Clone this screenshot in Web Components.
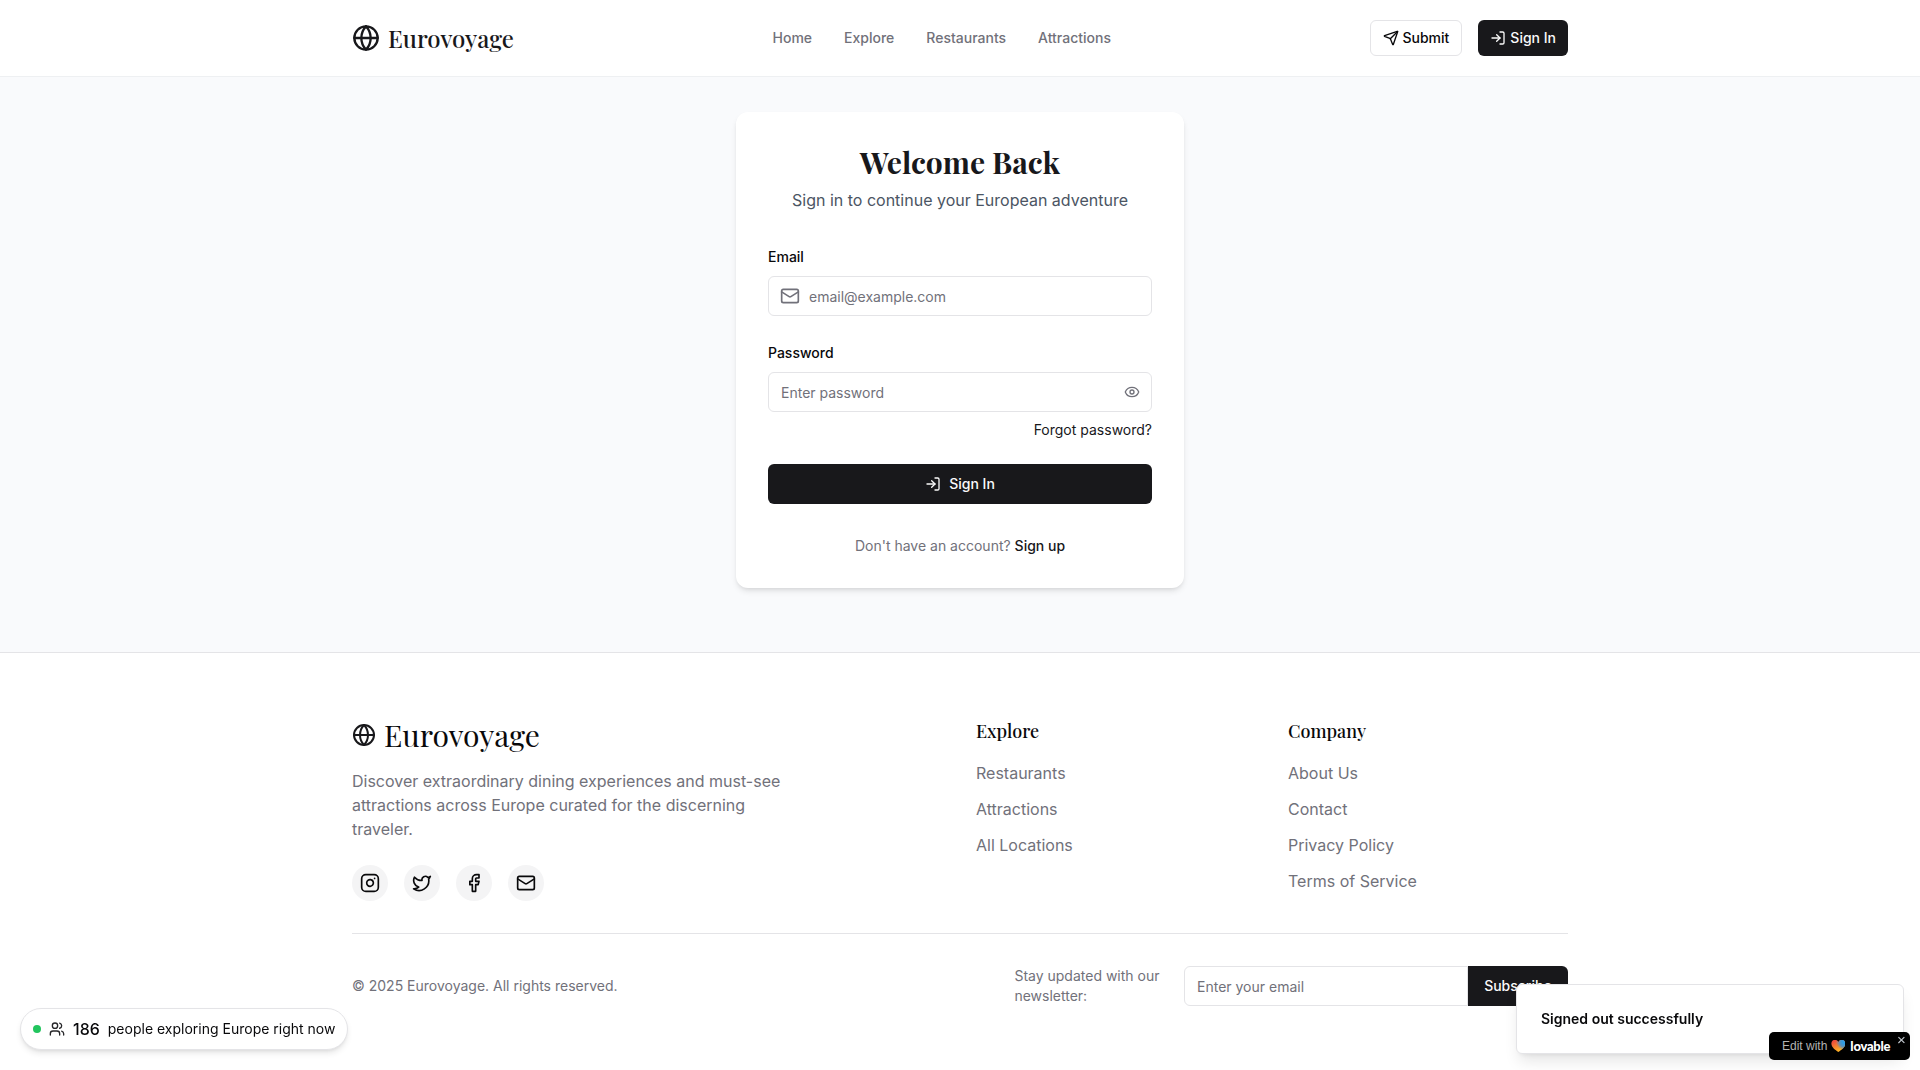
<!DOCTYPE html>
<html lang="en">
<head>
<meta charset="utf-8">
<title>Eurovoyage</title>
<style>
html,body{margin:0;height:1070px;overflow:hidden;background:#fff}
body{font:400 16px/24px Inter,sans-serif;color:#09090b;
--muted:#71717a;--line:#e4e4e7;--ink:#18181b;--serif:"Playfair Display","Liberation Serif",serif}
</style>
</head>
<body>
<site-header></site-header>
<sign-in-page></sign-in-page>
<site-footer></site-footer>
<visitor-pill count="186">people exploring Europe right now</visitor-pill>
<toast-message>Signed out successfully</toast-message>
<edit-badge></edit-badge>
<script>
const base='<style>*{box-sizing:border-box;margin:0}:host{display:block;box-sizing:border-box}a{color:inherit;text-decoration:none;white-space:nowrap}</style>';
const define=(name,render)=>customElements.define(name,class extends HTMLElement{
  connectedCallback(){
    if(this.shadowRoot)return;
    this.attachShadow({mode:'open'}).innerHTML=base+render(this);
  }
});
const icons={
globe:'<circle cx="12" cy="12" r="10"/><path d="M12 2a14.5 14.5 0 0 0 0 20 14.5 14.5 0 0 0 0-20"/><path d="M2 12h20"/>',
send:'<path d="M14.536 21.686a.5.5 0 0 0 .937-.024l6.5-19a.496.496 0 0 0-.635-.635l-19 6.5a.5.5 0 0 0-.024.937l7.93 3.18a2 2 0 0 1 1.112 1.11z"/><path d="m21.854 2.147-10.94 10.939"/>',
login:'<path d="M15 3h4a2 2 0 0 1 2 2v14a2 2 0 0 1-2 2h-4"/><path d="m10 17 5-5-5-5"/><path d="M15 12H3"/>',
mail:'<rect width="20" height="16" x="2" y="4" rx="2"/><path d="m22 7-8.97 5.7a1.94 1.94 0 0 1-2.06 0L2 7"/>',
eye:'<path d="M2.062 12.348a1 1 0 0 1 0-.696 10.75 10.75 0 0 1 19.876 0 1 1 0 0 1 0 .696 10.75 10.75 0 0 1-19.876 0"/><circle cx="12" cy="12" r="3"/>',
instagram:'<rect width="20" height="20" x="2" y="2" rx="5"/><path d="M16 11.37A4 4 0 1 1 12.63 8 4 4 0 0 1 16 11.37z"/><path d="M17.5 6.5h.01"/>',
twitter:'<path d="M22 4s-.7 2.1-2 3.4c1.6 10-9.4 17.3-18 11.6 2.2.1 4.4-.6 6-2C3 15.5.5 9.6 3 5c2.2 2.6 5.6 4.1 9 4-.9-4.2 4-6.6 7-3.8 1.1 0 3-1.2 3-1.2z"/>',
facebook:'<path d="M18 2h-3a5 5 0 0 0-5 5v3H7v4h3v8h4v-8h3l1-4h-4V7a1 1 0 0 1 1-1h3z"/>',
users:'<path d="M16 21v-2a4 4 0 0 0-4-4H6a4 4 0 0 0-4 4v2"/><circle cx="9" cy="7" r="4"/><path d="M22 21v-2a4 4 0 0 0-3-3.87"/><path d="M16 3.13a4 4 0 0 1 0 7.75"/>'
};
define('line-icon',e=>{const s=e.getAttribute('size')||16;return `<style>:host{flex:none;width:${s}px;height:${s}px}svg{display:block}</style><svg width="${s}" height="${s}" viewBox="0 0 24 24" fill="none" stroke="currentColor" stroke-width="2" stroke-linecap="round" stroke-linejoin="round">${icons[e.getAttribute('name')]}</svg>`});

define('ui-button',e=>`<style>:host{display:flex;flex:none}
button{font:500 14px/20px Inter,sans-serif;width:100%;height:var(--h,36px);padding:0 12px;display:flex;align-items:center;justify-content:center;gap:var(--gap,4px);border:0;border-radius:var(--r,6px);background:var(--ink);color:#fafafa;white-space:nowrap}
:host([outline]) button{background:#fff;border:1px solid var(--line);color:#09090b}</style><button><slot></slot></button>`);

define('text-field',e=>`<style>.box{display:flex;align-items:center;gap:8px;height:40px;padding:0 11px 0 12px;border:1px solid var(--line);border-radius:var(--r,6px);background:#fff;color:var(--muted)}
:host([icon]) .box{padding-left:11px;gap:9px}
label{display:block;font:500 14px/20px Inter,sans-serif;margin-bottom:9px}
input{flex:1;min-width:0;border:0;padding:2px 0 0;outline:0;background:none;font:400 14px/20px Inter,sans-serif}
input::placeholder{color:var(--muted);opacity:1}</style>
${e.hasAttribute('label')?`<label>${e.getAttribute('label')}</label>`:''}
<div class="box"><slot name="before"></slot><input placeholder="${e.getAttribute('placeholder')}"><slot name="after"></slot></div>`);

define('site-header',()=>`<style>:host{height:77px;border-bottom:1px solid #eef0f2;background:#fff}
.row{width:1216px;height:76px;margin:auto;display:flex;align-items:center;justify-content:space-between}
.logo{display:flex;align-items:center;gap:8px;width:162px;color:var(--ink);font:500 24px/32px var(--serif)}
nav{display:flex;gap:32px;font:500 14px/20px Inter,sans-serif;color:var(--muted)}
.act{display:flex;gap:16px}</style>
<div class="row"><div class="logo"><line-icon name="globe" size="28"></line-icon><span>Eurovoyage</span></div>
<nav><a>Home</a><a>Explore</a><a>Restaurants</a><a>Attractions</a></nav>
<div class="act"><ui-button outline><line-icon name="send"></line-icon>Submit</ui-button><ui-button><line-icon name="login"></line-icon>Sign In</ui-button></div></div>`);

define('sign-in-page',()=>`<style>:host{height:575px;padding-top:35px;background:#f9fafc}
.card{width:448px;height:476px;margin:auto;padding:32px;border-radius:12px;background:#fff;box-shadow:0 4px 6px -1px #0000001a,0 2px 4px -2px #0000001a}
h1{font:700 30px/36px var(--serif);text-align:center;color:var(--ink);margin-bottom:8px}
.sub{text-align:center;color:#4b5563;margin-bottom:35px}
text-field+text-field{margin-top:27px}
.forgot{font-size:14px;line-height:20px;text-align:right;margin:8px 0 24px;color:var(--ink)}
ui-button{--h:40px;--gap:8px}
.up{margin-top:32px;text-align:center;font-size:14px;line-height:20px;color:var(--muted)}.up a{font-weight:500;color:var(--ink)}</style>
<div class="card"><h1>Welcome Back</h1><p class="sub">Sign in to continue your European adventure</p>
<text-field icon label="Email" placeholder="email@example.com"><line-icon slot="before" name="mail" size="20"></line-icon></text-field>
<text-field label="Password" placeholder="Enter password"><line-icon slot="after" name="eye"></line-icon></text-field>
<p class="forgot"><a>Forgot password?</a></p>
<ui-button><line-icon name="login"></line-icon>Sign In</ui-button>
<p class="up">Don't have an account? <a>Sign up</a></p></div>`);

define('link-column',e=>`<style>h3{font:500 18px/28px var(--serif);margin-bottom:16px}
ul{list-style:none;padding:0;display:flex;flex-direction:column;gap:12px;color:var(--muted)}</style>
<h3>${e.getAttribute('heading')}</h3><ul>${e.getAttribute('links').split('|').map(t=>`<li><a>${t}</a></li>`).join('')}</ul>`);

define('site-footer',()=>`<style>:host{height:418px;border-top:1px solid var(--line);padding-top:64px;background:#fff}
.wrap{width:1216px;margin:auto}
.grid{display:grid;grid-template-columns:592px 280px 280px;gap:32px;border-bottom:1px solid var(--line);height:217px}
.logo{display:flex;align-items:center;gap:8px;font:400 30px/36px var(--serif)}
.logo line-icon{color:var(--ink)}
.about{width:448px;margin:16px 0 24px;color:var(--muted)}
.social{display:flex;gap:16px}.social a{width:36px;height:36px;border-radius:50%;background:#f4f4f5;display:grid;place-items:center}
.bottom{display:flex;align-items:center;padding-top:32px;font-size:14px;line-height:20px;color:var(--muted)}
.news{margin-left:auto;display:flex;align-items:center}.news p{width:169.6px;padding-right:16px}
text-field{width:284px;--r:6px 0 0 6px}ui-button{width:100px;--h:40px;--r:0 6px 6px 0}</style>
<div class="wrap"><div class="grid"><div>
<div class="logo"><line-icon name="globe" size="24"></line-icon><span>Eurovoyage</span></div>
<p class="about">Discover extraordinary dining experiences and must-see attractions across Europe curated for the discerning traveler.</p>
<div class="social">${['instagram','twitter','facebook','mail'].map(n=>`<a><line-icon name="${n}" size="20"></line-icon></a>`).join('')}</div></div>
<link-column heading="Explore" links="Restaurants|Attractions|All Locations"></link-column>
<link-column heading="Company" links="About Us|Contact|Privacy Policy|Terms of Service"></link-column></div>
<div class="bottom"><span>© 2025 Eurovoyage. All rights reserved.</span>
<div class="news"><p>Stay updated with our newsletter:</p><text-field placeholder="Enter your email"></text-field><ui-button>Subscribe</ui-button></div></div></div>`);

define('visitor-pill',e=>`<style>:host{position:fixed;left:20px;bottom:20px;height:42px;padding:0 12px;display:flex;align-items:center;gap:8px;border:1px solid var(--line);border-radius:21px;background:#fff;font-size:14px;line-height:20px;white-space:nowrap;box-shadow:0 4px 6px -1px #0000001a,0 2px 4px -2px #0000001a}
i{width:8px;height:8px;border-radius:50%;background:#22c55e}b{font:500 16px/24px Inter,sans-serif}line-icon{color:#27272a}</style>
<i></i><line-icon name="users"></line-icon><b>${e.getAttribute('count')}</b><span><slot></slot></span>`);

define('toast-message',()=>`<style>:host{position:fixed;right:16px;bottom:16px;width:388px;height:70px;padding:0 24px;display:flex;align-items:center;border:1px solid var(--line);border-radius:6px;background:#fff;font:600 14px/20px Inter,sans-serif;box-shadow:0 10px 15px -3px #0000001a,0 4px 6px -4px #0000001a}</style><slot></slot>`);

define('edit-badge',()=>`<style>:host{position:fixed;right:10px;bottom:10px;width:141px;height:28px;padding-left:13px;display:flex;align-items:center;background:#000;border-radius:5px;color:#b4b4b4;font:12px/16px "Liberation Sans",sans-serif;white-space:nowrap}
b{font:900 13px/16px Lato,sans-serif;letter-spacing:-.25px;color:#fff}
.x{position:absolute;right:4px;top:3px;width:9px;line-height:10px;font-size:15px;color:#c3c9d0}
.heart{display:block;flex:none;width:14px;height:13px;margin:0 5px 0 4px;clip-path:path("M7 12.5C4 10.5 0 7.8 0 4C0 0 5 -1.2 7 2.4C9 -1.2 14 0 14 4C14 7.8 10 10.5 7 12.5Z");background:radial-gradient(circle at 95% 15%,#2f9be0 10%,#5a8fb8 28%,transparent 48%),linear-gradient(155deg,#ef4b3c 12%,#f47b2f 42%,#fbad25 72%)}</style>
<span>Edit with</span><i class="heart"></i><b>lovable</b><span class="x">×</span>`);
</script>
</body>
</html>
